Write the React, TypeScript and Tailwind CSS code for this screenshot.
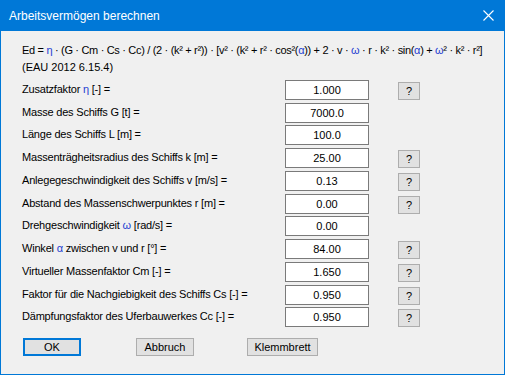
import React from "react";

const G = ({ c }: { c: string }) => <span className="text-[#1f3fd0]">{c}</span>;

type Row = { label: React.ReactNode; value: string; help: boolean; mt: string };

const rows: Row[] = [
  { label: <>Zusatzfaktor <G c="η" /> [-] =</>, value: "1.000", help: true, mt: "mt-0" },
  { label: <>Masse des Schiffs G [t] =</>, value: "7000.0", help: false, mt: "mt-[3px]" },
  { label: <>Länge des Schiffs L [m] =</>, value: "100.0", help: false, mt: "mt-[2px]" },
  { label: <>Massenträgheitsradius des Schiffs k [m] =</>, value: "25.00", help: true, mt: "mt-[3px]" },
  { label: <>Anlegegeschwindigkeit des Schiffs v [m/s] =</>, value: "0.13", help: true, mt: "mt-[3px]" },
  { label: <>Abstand des Massenschwerpunktes r [m] =</>, value: "0.00", help: true, mt: "mt-[3px]" },
  { label: <>Drehgeschwindigkeit <G c="ω" /> [rad/s] =</>, value: "0.00", help: false, mt: "mt-[2px]" },
  { label: <>Winkel <G c="α" /> zwischen v und r [°] =</>, value: "84.00", help: true, mt: "mt-[3px]" },
  { label: <>Virtueller Massenfaktor Cm [-] =</>, value: "1.650", help: true, mt: "mt-[3px]" },
  { label: <>Faktor für die Nachgiebigkeit des Schiffs Cs [-] =</>, value: "0.950", help: true, mt: "mt-[3px]" },
  { label: <>Dämpfungsfaktor des Uferbauwerkes Cc [-] =</>, value: "0.950", help: true, mt: "mt-[2px]" },
];

export default function App() {
  return (
    <div
      className="w-[505px] h-[375px] flex flex-col text-[11px] text-black"
      style={{ fontFamily: '"Liberation Sans", Arial, sans-serif' }}
    >
      <div className="h-[31px] bg-[#0078d7] flex items-center justify-between pl-[9px] pr-[11px] shrink-0">
        <span className="text-white text-[12px] leading-none">Arbeitsvermögen berechnen</span>
        <svg width="11" height="11" viewBox="0 0 11 11">
          <path d="M0.5 0.5 L10.5 10.5 M10.5 0.5 L0.5 10.5" stroke="white" strokeWidth="1.1" />
        </svg>
      </div>
      <div className="flex-1 bg-[#f0f0f0] border-x border-b border-[#0078d7] pl-[21px] flex flex-col">
        <div className="mt-[11px] leading-[17px] tracking-[-0.32px] whitespace-nowrap">
          Ed = <G c="η" /> · (G · Cm · Cs · Cc) / (2 · (k² + r²)) · [v² · (k² + r² · cos²(<G c="α" />)) + 2 · v · <G c="ω" /> · r · k² · sin(<G c="α" />) + <G c="ω" />² · k² · r²]
        </div>
        <div className="leading-[17px]">(EAU 2012 6.15.4)</div>
        <div className="flex flex-col mt-[4px]">
          {rows.map((r, i) => (
            <div key={i} className={`flex items-start h-[20px] ${r.mt}`}>
              <div className="w-[263px] pt-[3px] leading-[13px] tracking-[-0.2px] whitespace-nowrap">{r.label}</div>
              <div className="w-[84px] h-[20px] bg-white border border-[#7a7a7a] flex items-center justify-center leading-none">
                {r.value}
              </div>
              {r.help && (
                <div className="ml-[29px] mt-[2px] w-[22px] h-[18px] bg-[#e1e1e1] border border-[#adadad] flex items-center justify-center leading-none">
                  ?
                </div>
              )}
            </div>
          ))}
        </div>
        <div className="flex items-start mt-[11px] pl-[1px]">
          <div className="w-[58px] h-[18px] bg-[#e1e1e1] border-2 border-[#0078d7] flex items-center justify-center leading-none">
            OK
          </div>
          <div className="ml-[55px] w-[58px] h-[18px] bg-[#e1e1e1] border border-[#adadad] flex items-center justify-center leading-none">
            Abbruch
          </div>
          <div className="ml-[53px] w-[71px] h-[18px] bg-[#e1e1e1] border border-[#adadad] flex items-center justify-center leading-none">
            Klemmbrett
          </div>
        </div>
      </div>
    </div>
  );
}
